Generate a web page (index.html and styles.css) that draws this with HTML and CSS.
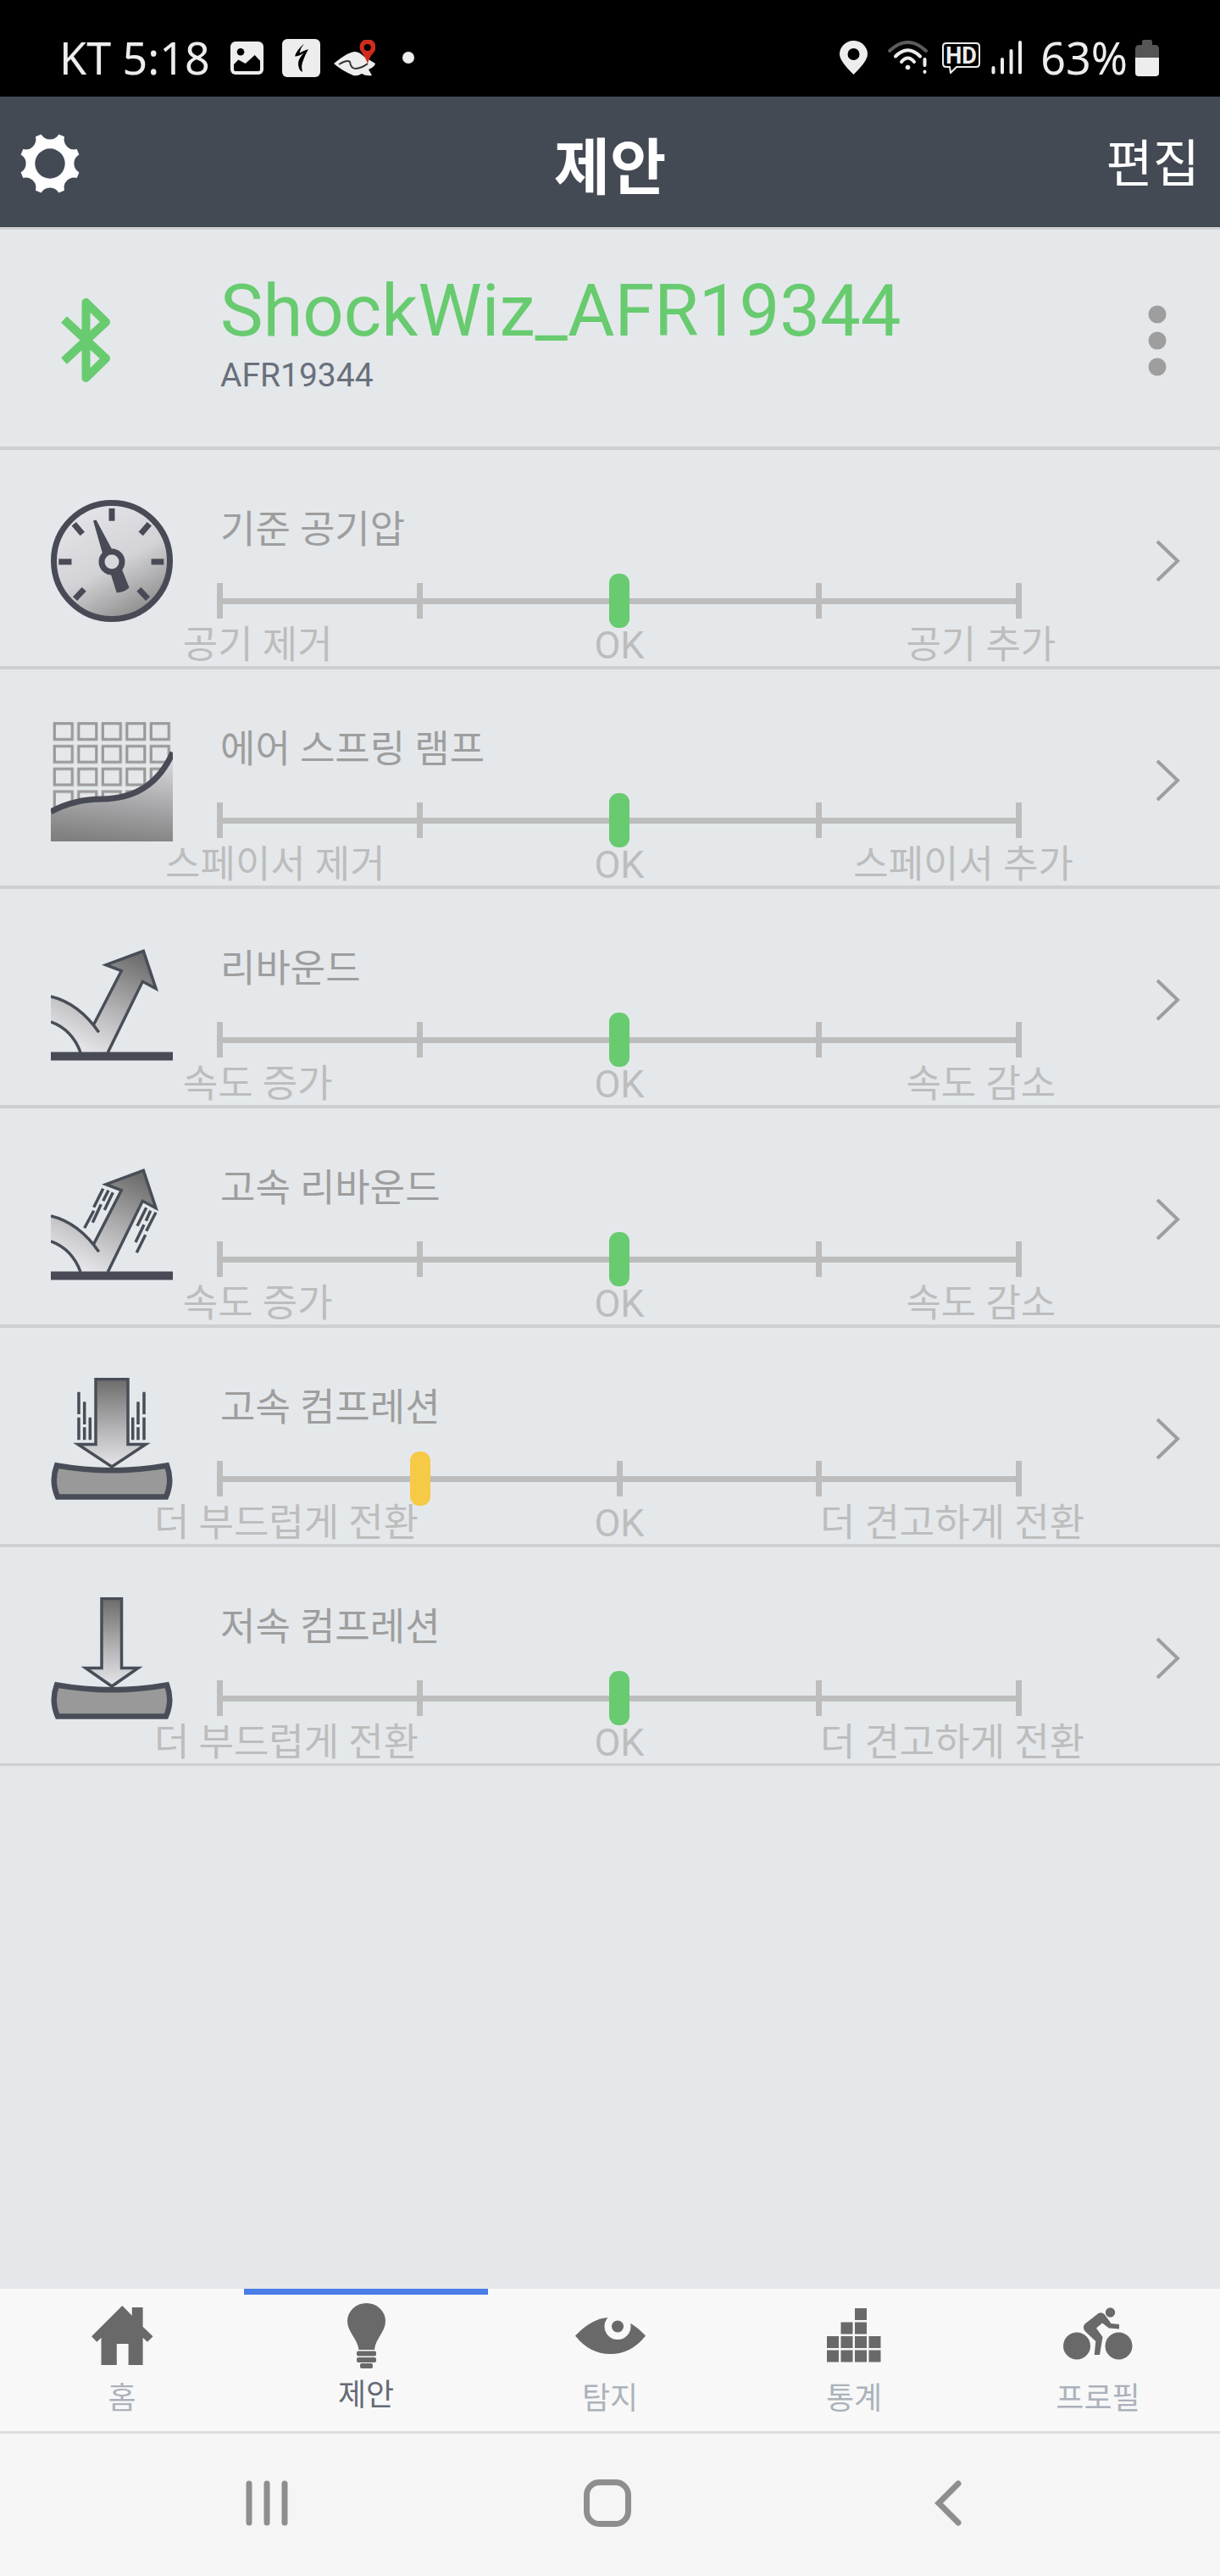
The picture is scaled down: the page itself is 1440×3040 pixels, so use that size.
FILE: index.html
```html
<!DOCTYPE html>
<html lang="ko">
<head>
  <meta charset="UTF-8" />
  <meta name="viewport" content="width=device-width, initial-scale=1.0"/>
  <title>제안</title>
  <link rel="stylesheet" href="styles.css">
</head>
<body>
  <div class="status-bar">
    <div class="status-left">
      <span class="clock">KT 5:18</span>
      <svg class="icon-photo" width="39" height="39" viewBox="0 0 39 39">
        <rect width="39" height="39" rx="6" fill="#ededed"/>
        <circle cx="12" cy="12.3" r="4.3"/>
        <path d="M4 27 L9.3 21.5 L17.7 26 L28.7 16 L35 22.7 V33 Q35 35 33 35 H6 Q4 35 4 33Z"/>
      </svg>
      <svg class="icon-bolt" width="45" height="45" viewBox="0 0 45 45">
        <rect width="45" height="45" rx="6" fill="#ededed"/>
        <path d="M26 5.5 Q17 13 15 20.5 Q20 20.5 25.5 16.5 Q18.500 24 19 30 Q19.5 37 24 39 Q22 31 25 25 Q27 19 31 12 Q25 14 20.5 16.5 Q22 10 26 5.5Z"/>
      </svg>
      <svg class="icon-map" width="49" height="43" viewBox="0 0 49 43">
        <path d="M0 28 Q17 14 25 14 Q30 14 36 20 L49 28 Q48 32 41 35 L45 42 Q38 43 33 40 Q28 43 23 42 Q9 36 0 28Z" fill="#ededed"/>
        <path d="M6 29 Q16 23 19 26 Q20 34 26 34 Q34 33 40 28" fill="none" stroke="#333" stroke-width="2"/>
        <path d="M40 28 Q37 20 33 15 A9.5 9.5 0 1 1 47 15 Q42 20 40 28Z" fill="#cf2c1e"/>
        <circle cx="39.7" cy="9" r="4"/>
      </svg>
      <span class="more-dot"></span>
    </div>
    <div class="status-right">
      <svg class="icon-pin" width="33" height="40" viewBox="0 0 33 40">
        <path d="M16.5 40 Q0 24 0 16 A16.5 16 0 0 1 33 16 Q33 24 16.5 40Z M16.5 9 A7 7 0 1 0 16.5 23 A7 7 0 1 0 16.5 9Z" fill="#ededed"/>
      </svg>
      <svg class="icon-wifi" width="48" height="40" viewBox="0 0 48 40" fill="none" stroke-linecap="round">
        <path d="M2 12 Q23.5 -8 45 12" stroke="#5c5c5c" stroke-width="4"/>
        <path d="M9 18.5 Q23.5 4 38 18.5 M16 25 Q23.5 16 31 25" stroke="#ededed" stroke-width="4"/>
        <circle cx="23.5" cy="31.5" r="2.8" fill="#ededed"/>
        <path d="M43.5 22 V29 M43.5 36.5 V37" stroke="#ededed" stroke-width="4"/>
      </svg>
      <svg class="icon-hd" width="45" height="37" viewBox="0 0 45 37">
        <path d="M5 1 H40 Q44 1 44 5 V25 Q44 29 40 29 H17 L10 36 L9 29 H5 Q1 29 1 25 V5 Q1 1 5 1Z" fill="none" stroke="#ededed" stroke-width="2"/>
        <text class="hd-text" x="22.5" y="24.5" text-anchor="middle">HD</text>
      </svg>
      <svg class="icon-signal" width="36" height="40" viewBox="0 0 36 40" stroke="#ededed" stroke-width="4" stroke-linecap="round">
        <path d="M2.5 32 V37.5 M13 22 V37.5 M23.5 12 V37.5 M34 2 V37.5"/>
      </svg>
      <span class="battery-text">63%</span>
      <svg class="icon-battery" width="28" height="43" viewBox="0 0 28 43">
        <path d="M8 6 V2 Q8 0 10 0 H18 Q20 0 20 2 V6 H23 Q28 6 28 11 V21 H0 V11 Q0 6 5 6Z" fill="#555"/>
        <path d="M0 21 H28 V39 Q28 43 24 43 H4 Q0 43 0 39Z" fill="#ededed"/>
      </svg>
    </div>
  </div>

  <header class="app-header">
    <button type="button" class="settings" aria-label="설정">
      <svg width="70" height="70" viewBox="-35 -35 70 70" fill="#fff">
        <path fill-rule="evenodd" d="M-10.4 -34.4 A12 12 0 0 0 10.4 -34.4 L17 -31.7 A12 12 0 0 0 31.7 -17 L34.4 -10.4 A12 12 0 0 0 34.4 10.4 L31.7 17 A12 12 0 0 0 17 31.7 L10.4 34.4 A12 12 0 0 0 -10.4 34.4 L-17 31.7 A12 12 0 0 0 -31.7 17 L-34.4 10.4 A12 12 0 0 0 -34.4 -10.4 L-31.7 -17 A12 12 0 0 0 -17 -31.7Z M0 -17.7 A17.7 17.7 0 1 0 0 17.7 A17.7 17.7 0 1 0 0 -17.7Z"/>
      </svg>
    </button>
    <h1>제안</h1>
    <button type="button" class="edit">편집</button>
  </header>

  <main>
    <section class="device">
      <div class="device-icon">
        <svg width="59" height="101" viewBox="0 0 59 101" fill="none" stroke="#68cb6f" stroke-width="10" stroke-linejoin="round">
          <path d="M3.5 26 L53 72 L29.5 95 V6 L53 29 L3.5 75"/>
        </svg>
      </div>
      <div class="device-text">
        <h2>ShockWiz_AFR19344</h2>
        <p>AFR19344</p>
      </div>
      <button type="button" class="more" aria-label="더보기">
        <svg width="22" height="84" viewBox="0 0 22 84" fill="#9e9e9e">
          <circle cx="11" cy="11" r="10.5"/>
          <circle cx="11" cy="42" r="10.5"/>
          <circle cx="11" cy="73" r="10.5"/>
        </svg>
      </button>
    </section>

    <ul class="tuning">
      <!-- 기준 공기압 -->
      <li class="row">
        <svg class="row-icon" viewBox="0 0 144 144">
          <defs>
            <linearGradient id="dial" x1="0.3" y1="0.1" x2="0.75" y2="0.95">
              <stop offset="0" stop-color="#e2e2e6"/>
              <stop offset="0.5" stop-color="#d3d3d7"/>
              <stop offset="1" stop-color="#8e8e8e"/>
            </linearGradient>
          </defs>
          <circle cx="72" cy="72" r="68.5" fill="url(#dial)" stroke="#484b55" stroke-width="7"/>
          <path d="M72 10 V24.7 M9.3 73 H24.5 M118.6 73 H133.3 M27.2 28.3 L37.3 40 M116.3 28.3 L106.2 40 M28.6 116.7 L39.2 105.3 M114.5 116.7 L103.9 105.3" stroke="#484b55" stroke-width="7"/>
          <path d="M50 24.5 L53.5 23.5 L72 58 L61 63Z M70 85 L77.7 109.5 Q87 109 92.5 103.5 L84 82Z" fill="#484b55"/>
          <circle cx="72" cy="73" r="12" fill="#d8d8dc" stroke="#484b55" stroke-width="7"/>
        </svg>
        <div class="row-body">
          <label for="pressure">기준 공기압</label>
          <div class="scale"><input type="range" id="pressure" min="-2" max="2" step="1" value="0"></div>
          <div class="scale-labels"><span>공기 제거</span><span>OK</span><span>공기 추가</span></div>
        </div>
        <button type="button" class="next" aria-label="기준 공기압 상세">
          <svg width="30" height="50" viewBox="0 0 30 50"><path d="M2 2 L26 25 L2 48" fill="none" stroke="#9e9e9e" stroke-width="4"/></svg>
        </button>
      </li>

      <!-- 에어 스프링 램프 -->
      <li class="row">
        <svg class="row-icon" viewBox="0 0 144 144">
          <defs>
            <pattern id="grid" width="28.5" height="26.8" patternUnits="userSpaceOnUse">
              <rect x="4.3" y="4.8" width="21" height="18.8" fill="none" stroke="#999" stroke-width="3.2"/>
            </pattern>
            <linearGradient id="ramp" x1="0.6" y1="0" x2="0.45" y2="1">
              <stop offset="0" stop-color="#dcdce0"/>
              <stop offset="0.6" stop-color="#a3a3a5"/>
              <stop offset="1" stop-color="#808080"/>
            </linearGradient>
          </defs>
          <rect width="142" height="107" fill="url(#grid)"/>
          <path d="M0 109 C20 98 38 94 60 94 C100 94 128 75 144 39 V144 H0Z" fill="url(#ramp)"/>
          <path d="M0 109 C20 98 38 94 60 94 C100 94 128 75 144 39" fill="none" stroke="#484b55" stroke-width="7"/>
        </svg>
        <div class="row-body">
          <label for="ramp-up">에어 스프링 램프</label>
          <div class="scale"><input type="range" id="ramp-up" min="-2" max="2" step="1" value="0"></div>
          <div class="scale-labels"><span>스페이서 제거</span><span>OK</span><span>스페이서 추가</span></div>
        </div>
        <button type="button" class="next" aria-label="에어 스프링 램프 상세">
          <svg width="30" height="50" viewBox="0 0 30 50"><path d="M2 2 L26 25 L2 48" fill="none" stroke="#9e9e9e" stroke-width="4"/></svg>
        </button>
      </li>

      <!-- 리바운드 -->
      <li class="row">
        <svg class="row-icon" viewBox="0 0 144 144">
          <defs>
            <linearGradient id="bounce" gradientUnits="userSpaceOnUse" x1="105" y1="20" x2="50" y2="134">
              <stop offset="0" stop-color="#6c6c6c"/>
              <stop offset="0.6" stop-color="#b8b8ba"/>
              <stop offset="1" stop-color="#e4e4e8"/>
            </linearGradient>
            <g id="rebound-arrow">
              <path d="M0 68 Q29 75 50.7 101 L83.3 37.7 L65 30.7 L109.3 14.3 L124 58.7 L108.3 50.3 L67.3 134 H35 Q25 107 0 98Z" fill="url(#bounce)"/>
              <path d="M0 68 Q33 76 56.7 110.3 M50.7 101 L83.3 37.7 L65 30.7 L109.3 14.3 L124 58.7 L108.3 50.3 L67.3 134 M35 134 Q25 107 0 98" fill="none" stroke="#484d57" stroke-width="3.5"/>
              <rect y="133.5" width="144" height="10" fill="#484b55"/>
            </g>
          </defs>
          <use href="#rebound-arrow"/>
        </svg>
        <div class="row-body">
          <label for="rebound">리바운드</label>
          <div class="scale"><input type="range" id="rebound" min="-2" max="2" step="1" value="0"></div>
          <div class="scale-labels"><span>속도 증가</span><span>OK</span><span>속도 감소</span></div>
        </div>
        <button type="button" class="next" aria-label="리바운드 상세">
          <svg width="30" height="50" viewBox="0 0 30 50"><path d="M2 2 L26 25 L2 48" fill="none" stroke="#9e9e9e" stroke-width="4"/></svg>
        </button>
      </li>

      <!-- 고속 리바운드 -->
      <li class="row">
        <svg class="row-icon" viewBox="0 0 144 144">
          <use href="#rebound-arrow"/>
          <path d="M61.7 35.7 L50.7 57.7 M50.7 61.7 L39.7 82.3 M68 37.7 L61.7 50.3 M59.3 54.3 L49.3 75.7 M73.3 40.3 L63.3 61 M112.7 58.3 L102 79.7 M117.7 61.7 L112.3 73.7 M124 63.7 L112.7 85.7 M110 78.3 L100 99 M111.7 90.3 L101.3 111.3" stroke="#484d57" stroke-width="3.5"/>
        </svg>
        <div class="row-body">
          <label for="hs-rebound">고속 리바운드</label>
          <div class="scale"><input type="range" id="hs-rebound" min="-2" max="2" step="1" value="0"></div>
          <div class="scale-labels"><span>속도 증가</span><span>OK</span><span>속도 감소</span></div>
        </div>
        <button type="button" class="next" aria-label="고속 리바운드 상세">
          <svg width="30" height="50" viewBox="0 0 30 50"><path d="M2 2 L26 25 L2 48" fill="none" stroke="#9e9e9e" stroke-width="4"/></svg>
        </button>
      </li>

      <!-- 고속 컴프레션 -->
      <li class="row">
        <svg class="row-icon" viewBox="0 0 144 144">
          <defs>
            <linearGradient id="press" x1="0" y1="0" x2="0" y2="1">
              <stop offset="0" stop-color="#6c6c6c"/>
              <stop offset="0.6" stop-color="#b8b8ba"/>
              <stop offset="1" stop-color="#e6e6ea"/>
            </linearGradient>
            <path id="tire" d="M7 103.5 Q72 115 137 103.5 Q144 122 136 140.5 H8 Q0 122 7 103.5Z" fill="#999" stroke="#484d57" stroke-width="6.5"/>
          </defs>
          <use href="#tire"/>
          <path d="M53 1.5 H91 V78.5 H112 L72 105 L32 78.5 H53Z" fill="url(#press)" stroke="#484d57" stroke-width="3.5"/>
          <path d="M33 16.7 V43 M33 46.7 V73.3 M39.7 28.3 V55 M39.7 58.3 V73.3 M46.3 46.7 V73.3 M96.7 46.7 V73.3 M103 28.3 V55 M103 58.3 V73.3 M110 16.7 V43 M110 46.7 V73.3" stroke="#484d57" stroke-width="3.5"/>
        </svg>
        <div class="row-body">
          <label for="hs-compression">고속 컴프레션</label>
          <div class="scale"><input type="range" class="warn" id="hs-compression" min="-2" max="2" step="1" value="-1"></div>
          <div class="scale-labels"><span>더 부드럽게 전환</span><span>OK</span><span>더 견고하게 전환</span></div>
        </div>
        <button type="button" class="next" aria-label="고속 컴프레션 상세">
          <svg width="30" height="50" viewBox="0 0 30 50"><path d="M2 2 L26 25 L2 48" fill="none" stroke="#9e9e9e" stroke-width="4"/></svg>
        </button>
      </li>

      <!-- 저속 컴프레션 -->
      <li class="row">
        <svg class="row-icon" viewBox="0 0 144 144">
          <use href="#tire"/>
          <path d="M60 1.5 H83.5 V83.5 H103 L72 105 L41 83.5 H60Z" fill="url(#press)" stroke="#484d57" stroke-width="3.5"/>
        </svg>
        <div class="row-body">
          <label for="ls-compression">저속 컴프레션</label>
          <div class="scale"><input type="range" id="ls-compression" min="-2" max="2" step="1" value="0"></div>
          <div class="scale-labels"><span>더 부드럽게 전환</span><span>OK</span><span>더 견고하게 전환</span></div>
        </div>
        <button type="button" class="next" aria-label="저속 컴프레션 상세">
          <svg width="30" height="50" viewBox="0 0 30 50"><path d="M2 2 L26 25 L2 48" fill="none" stroke="#9e9e9e" stroke-width="4"/></svg>
        </button>
      </li>
    </ul>
  </main>

  <nav class="tabs">
    <a href="#home">
      <span class="tab-icon">
        <svg width="73" height="70" viewBox="0 0 73 70"><path d="M36.3 0 L47.8 11.7 V2 H60.6 V24.7 L72.5 36.3 L66 42.7 L60.6 37.7 V70 H43.6 V45 H29.8 V70 H11.5 V37.7 L6.4 42.7 L0 36.3Z"/></svg>
      </span>
      홈
    </a>
    <a href="#suggestions" class="active">
      <span class="tab-icon">
        <svg width="45" height="77" viewBox="0 0 45 77">
          <path d="M13.5 55 C12 42 0 34 0 21 A22.5 21 0 0 1 45 21 C45 34 33 42 32 55Z"/>
          <rect x="11" y="56.5" width="23" height="6" rx="2"/>
          <rect x="11" y="64" width="23" height="6" rx="2"/>
          <rect x="15" y="71" width="15" height="6" rx="2"/>
        </svg>
      </span>
      제안
    </a>
    <a href="#detect">
      <span class="tab-icon">
        <svg width="83" height="43" viewBox="0 0 83 43">
          <path d="M0 21.5 Q20 0 41.5 0 Q63 0 83 21.5 Q66 43 41.5 43 Q17 43 0 21.5Z"/>
          <circle cx="50" cy="10.5" r="15.5" fill="#f8f8f8"/>
          <circle cx="50" cy="10.5" r="7"/>
        </svg>
      </span>
      탐지
    </a>
    <a href="#stats">
      <span class="tab-icon">
        <svg width="64" height="64" viewBox="0 0 64 64">
          <path d="M33 0 h14 v14 h-14z M16.5 16.5 h14 v14 h-14z M33 16.5 h14 v14 h-14z M0 33 h14 v14 h-14z M16.5 33 h14 v14 h-14z M33 33 h14 v14 h-14z M49.5 33 h14 v14 h-14z M0 49.5 h14 v14 h-14z M16.5 49.5 h14 v14 h-14z M33 49.5 h14 v14 h-14z M49.5 49.5 h14 v14 h-14z"/>
        </svg>
      </span>
      통계
    </a>
    <a href="#profile">
      <span class="tab-icon">
        <svg width="82" height="68" viewBox="0 0 82 68">
          <circle cx="16" cy="46.5" r="16"/>
          <circle cx="65.5" cy="46.5" r="16"/>
          <circle cx="55.5" cy="7" r="5.7"/>
          <path d="M25.5 20.5 L41.5 8 Q45 6 48.5 9 L56.5 20 L66 21 V26.5 L54 25.5 L46 19.5 L39 25.5 L46.5 36 L43 57 H36.7 L38.3 41 L26 29.5 Q22 25 25.5 20.5Z"/>
        </svg>
      </span>
      프로필
    </a>
  </nav>

  <div class="system-nav">
    <button type="button" aria-label="최근 앱">
      <svg width="50" height="54" viewBox="0 0 50 54" stroke="#8e8e8e" stroke-width="7" stroke-linecap="round"><path d="M4 4 V50 M25 4 V50 M46 4 V50"/></svg>
    </button>
    <button type="button" aria-label="홈 화면">
      <svg width="56" height="56" viewBox="0 0 56 56"><rect x="3.5" y="3.5" width="49" height="49" rx="15" fill="none" stroke="#8e8e8e" stroke-width="7"/></svg>
    </button>
    <button type="button" aria-label="뒤로">
      <svg width="32" height="54" viewBox="0 0 32 54"><path d="M28 4 L5 27 L28 50" fill="none" stroke="#8e8e8e" stroke-width="7" stroke-linecap="round"/></svg>
    </button>
  </div>
</body>
</html>
```

FILE: styles.css
```css
* {
  box-sizing: border-box;
}

body {
  margin: 0;
  min-height: 100vh;
  display: flex;
  flex-direction: column;
  background-color: #e4e8eb;
  color: #9e9e9e;
  font-family: Roboto, "Noto Sans CJK KR", sans-serif;
}

h1, h2, p, ul {
  margin: 0;
  padding: 0;
  font-weight: normal;
}

button {
  background: none;
  border: none;
  padding: 0;
  color: inherit;
  font-family: inherit;
  cursor: pointer;
}

svg {
  display: block;
  flex: none;
}

/* Status bar */
.status-bar {
  display: flex;
  justify-content: space-between;
  padding: 24px 72px 0 70px;
  height: 114px;
  background-color: #000;
  color: #ededed;
  font-family: "Noto Sans", sans-serif;
  font-size: 52px;
  line-height: 88px;
}

.status-left, .status-right {
  display: flex;
  align-items: center;
  height: 88px;
}

.icon-photo {
  margin-left: 24px;
}

.icon-bolt {
  margin-left: 22px;
}

.icon-map {
  margin-left: 16px;
}

.more-dot {
  width: 14px;
  height: 14px;
  margin-left: 32px;
  border-radius: 50%;
  background-color: #ededed;
}

.icon-wifi {
  margin-left: 24px;
}

.icon-hd {
  margin-left: 16px;
}

.hd-text {
  fill: #ededed;
  font-family: Roboto, sans-serif;
  font-size: 27px;
  font-weight: bold;
}

.icon-signal {
  margin-left: 13px;
}

.battery-text {
  margin-left: 22px;
}

.icon-battery {
  margin-left: 9px;
}

/* Header */
.app-header {
  display: grid;
  grid-template-columns: 1fr auto 1fr;
  align-items: center;
  height: 157px;
  padding: 4px 24px 0;
  background-color: #444a54;
  border-bottom: 3px solid #cfcfd1;
  color: #fff;
}

.app-header h1 {
  font-size: 72px;
  font-weight: bold;
  line-height: 96px;
  padding-top: 12px;
}

.settings {
  justify-self: start;
}

.edit {
  justify-self: end;
  padding-top: 4px;
  font-size: 60px;
  line-height: 80px;
}

/* Device */
.device {
  display: grid;
  grid-template-columns: 256px 1fr 148px;
  height: 260px;
  border-bottom: 4px solid #cdcfd1;
}

.device-icon {
  padding: 80px 0 0 72px;
}

.device-text {
  padding: 46px 0 0 4px;
}

.device-text h2 {
  color: #68cb6f;
  font-size: 85px;
  line-height: 100px;
}

.device-text p {
  color: #69707b;
  font-size: 39px;
  line-height: 52px;
}

.more {
  justify-self: center;
  padding-top: 6px;
}

/* Tuning rows */
.tuning {
  list-style: none;
}

.row {
  display: grid;
  grid-template-columns: 256px 1fr 234px;
  border-bottom: 4px solid #cdcfd1;
  font-size: 45px;
}

.row:last-child {
  border-bottom-width: 3px;
}

.row-icon {
  width: 144px;
  height: 144px;
  margin: 59px 0 0 60px;
}

.row-body {
  padding: 65px 0 4px;
}

.row-body label {
  display: block;
  padding-left: 4px;
  margin-bottom: 21px;
  line-height: 60px;
}

/* five ticks on a line */
.scale {
  display: flex;
  height: 64px;
  background-image:
    linear-gradient(#bdbdbd, #bdbdbd),
    linear-gradient(#bdbdbd, #bdbdbd),
    linear-gradient(#bdbdbd, #bdbdbd),
    linear-gradient(#bdbdbd, #bdbdbd),
    linear-gradient(#bdbdbd, #bdbdbd),
    linear-gradient(#bdbdbd, #bdbdbd);
  background-repeat: no-repeat;
  background-size: 100% 7px, 7px 42px, 7px 42px, 7px 42px, 7px 42px, 7px 42px;
  background-position: center, 0% 50%, 25% 50%, 50% 50%, 75% 50%, 100% 50%;
}

/* wider than the line by half a thumb, so the thumb stops on the end ticks */
.scale input {
  -webkit-appearance: none;
  appearance: none;
  flex: 1;
  height: 64px;
  margin: 0 -8px;
  background: none;
}

.scale input::-webkit-slider-thumb {
  -webkit-appearance: none;
  width: 24px;
  height: 64px;
  border-radius: 11px;
  background-color: #68cb6f;
}

.scale input.warn::-webkit-slider-thumb {
  background-color: #f6ca47;
}

.scale-labels {
  display: grid;
  grid-template-columns: 1fr auto 1fr;
  padding: 1px 4px 0;
  color: #bdbdbd;
  line-height: 40px;
}

.scale-labels span:first-child {
  justify-self: start;
  transform: translateX(-25%);
}

.scale-labels span:last-child {
  justify-self: end;
  transform: translateX(25%);
}

.next {
  justify-self: end;
  margin-right: 46px;
  padding-top: 6px;
}

/* Tabs */
.tabs {
  display: grid;
  grid-template-columns: repeat(5, 1fr);
  margin-top: auto;
  background-color: #f8f8f8;
  border-bottom: 3px solid #dcdcdc;
}

.tabs a {
  display: flex;
  flex-direction: column;
  align-items: center;
  height: 168px;
  padding-top: 9px;
  border-top: 7px solid transparent;
  color: #acb2bb;
  font-size: 36px;
  line-height: 48px;
  text-decoration: none;
}

.tabs a.active {
  border-top-color: #4a7de8;
  color: #646b76;
}

.tab-icon {
  display: flex;
  align-items: center;
  height: 78px;
  margin-bottom: 12px;
  fill: #696969;
}

.tabs .active .tab-icon {
  margin-bottom: 8px;
}

/* System navigation */
.system-nav {
  display: grid;
  grid-template-columns: repeat(3, 1fr);
  height: 168px;
  padding: 0 120px 5px 114px;
  background-color: #f5f5f5;
}

.system-nav button {
  display: flex;
  align-items: center;
  justify-content: center;
}
```
